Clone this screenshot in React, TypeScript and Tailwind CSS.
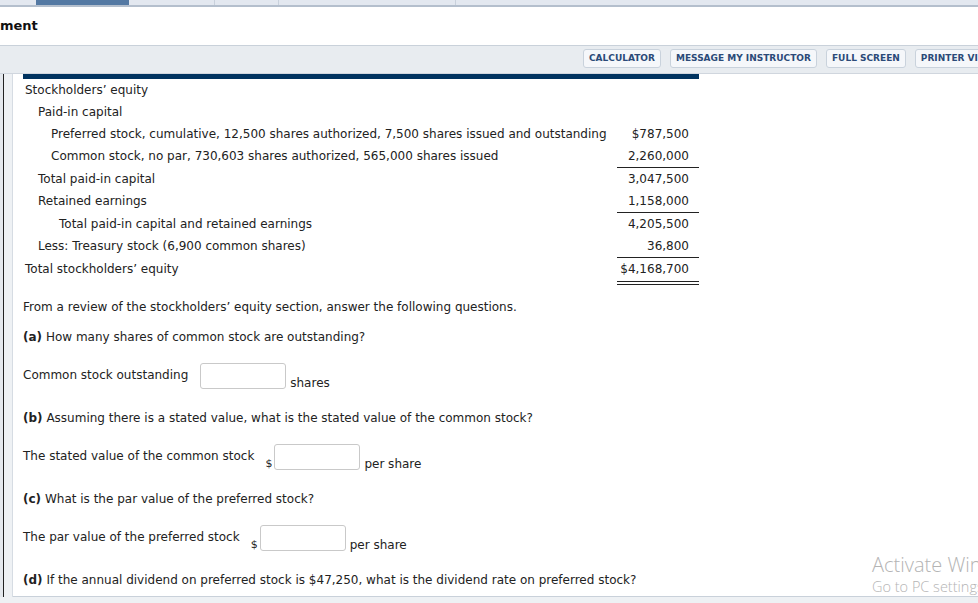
import React from 'react';

const font = { fontFamily: '"DejaVu Sans", Verdana, sans-serif' };

const rows = [
  { label: 'Stockholders\u2019 equity', indent: 'pl-[2px]', value: '', line: '' },
  { label: 'Paid-in capital', indent: 'pl-[15px]', value: '', line: '' },
  {
    label: 'Preferred stock, cumulative, 12,500 shares authorized, 7,500 shares issued and outstanding',
    indent: 'pl-[28px]',
    value: '$787,500',
    line: '',
  },
  {
    label: 'Common stock, no par, 730,603 shares authorized, 565,000 shares issued',
    indent: 'pl-[28px]',
    value: '2,260,000',
    line: '',
  },
  { label: 'Total paid-in capital', indent: 'pl-[15px]', value: '3,047,500', line: 'border-t border-[#222]' },
  { label: 'Retained earnings', indent: 'pl-[15px]', value: '1,158,000', line: '' },
  {
    label: 'Total paid-in capital and retained earnings',
    indent: 'pl-[36px]',
    value: '4,205,500',
    line: 'border-t border-[#222]',
  },
  { label: 'Less: Treasury stock (6,900 common shares)', indent: 'pl-[15px]', value: '36,800', line: '' },
  {
    label: 'Total stockholders\u2019 equity',
    indent: 'pl-[2px]',
    value: '$4,168,700',
    line: 'border-t border-[#222]',
  },
];

const AnswerInput: React.FC = () => (
  <div className="w-[86px] h-[26px] rounded-[3px] border border-[#c9c9c9] bg-white" />
);

const App: React.FC = () => {
  return (
    <div className="relative w-[978px] h-[603px] overflow-hidden bg-[#eef1f4] text-[#222]" style={font}>
      {/* top nav strip */}
      <div className="flex h-[7px] bg-[#e3e8f0] border-b-2 border-[#b4bfcd]">
        <div className="w-[36px]" />
        <div className="w-[93px] bg-[#5479a3]" />
        <div className="w-[86px] border-r border-[#c9d1dc]" />
        <div className="w-[64px] border-r border-[#c9d1dc]" />
        <div className="w-[177px] border-r border-[#c9d1dc]" />
      </div>

      {/* title */}
      <div className="h-[39px] flex items-center bg-white border-b border-[#c9d1da]">
        <span className="text-[13px] font-bold text-[#111]">ment</span>
      </div>

      {/* toolbar */}
      <div className="h-[28px] bg-[#e8ecf0] border-b border-[#d0d6de] overflow-hidden">
        <div className="w-[1000px] flex justify-end gap-[9px] pt-[3px]">
          {['CALCULATOR', 'MESSAGE MY INSTRUCTOR', 'FULL SCREEN', 'PRINTER VIEW'].map((b) => (
            <button
              key={b}
              className="h-[19px] px-[5px] rounded-[3px] border border-[#c9d2dc] bg-[#f5f7fa] text-[9px] font-bold text-[#2b4a78] leading-none whitespace-nowrap"
            >
              {b}
            </button>
          ))}
        </div>
      </div>

      <div className="flex h-[523px]">
        {/* left gutter */}
        <div className="flex w-[13px] shrink-0 bg-[#eef1f4] border-r border-[#d6dce3]">
          <div className="w-[3px] bg-[#e4e8ed]" />
          <div className="w-px bg-[#222]" />
        </div>

        <div className="flex-1 flex flex-col bg-white border-b border-[#c9d1da] pl-[10px] text-[12px]">
          {/* balance sheet */}
          <div className="w-[676px] border-t-[5px] border-[#00335f]">
            {rows.map((r) => (
              <div key={r.label} className="flex items-end last:mt-[1px]">
                <div className={`flex-1 leading-[22px] ${r.indent}`}>{r.label}</div>
                <div className={`w-[82px] text-right pr-[10px] leading-[22px] ${r.line}`}>{r.value}</div>
              </div>
            ))}
            <div className="flex justify-end">
              <div className="w-[82px] h-[4px] border-y border-[#222] mt-[1px]" />
            </div>
          </div>

          {/* questions */}
          <p className="mt-[15px] leading-[14px]">
            From a review of the stockholders&rsquo; equity section, answer the following questions.
          </p>
          <p className="mt-[16px] leading-[14px]">
            <b>(a)</b> How many shares of common stock are outstanding?
          </p>

          <div className="flex items-start mt-[19px]">
            <span className="mt-[5px] leading-[14px]">Common stock outstanding</span>
            <div className="flex items-end ml-[12px]">
              <AnswerInput />
              <span className="ml-[4px] leading-[14px] -mb-[1px]">shares</span>
            </div>
          </div>

          <p className="mt-[22px] leading-[14px]">
            <b>(b)</b> Assuming there is a stated value, what is the stated value of the common stock?
          </p>

          <div className="flex items-start mt-[19px]">
            <span className="mt-[5px] leading-[14px]">The stated value of the common stock</span>
            <div className="flex items-end ml-[11px]">
              <span className="leading-[14px] -mb-[1px] text-[11px] mr-[2px]">$</span>
              <AnswerInput />
              <span className="ml-[4px] leading-[14px] -mb-[1px]">per share</span>
            </div>
          </div>

          <p className="mt-[22px] leading-[14px]">
            <b>(c)</b> What is the par value of the preferred stock?
          </p>

          <div className="flex items-start mt-[19px]">
            <span className="mt-[5px] leading-[14px]">The par value of the preferred stock</span>
            <div className="flex items-end ml-[11px]">
              <span className="leading-[14px] -mb-[1px] text-[11px] mr-[2px]">$</span>
              <AnswerInput />
              <span className="ml-[4px] leading-[14px] -mb-[1px]">per share</span>
            </div>
          </div>

          <p className="mt-[22px] leading-[14px]">
            <b>(d)</b> If the annual dividend on preferred stock is $47,250, what is the dividend rate on preferred stock?
          </p>
        </div>
      </div>

      {/* windows activation watermark */}
      <div
        className="absolute left-[872px] top-[552px] text-[#b4b4b4] whitespace-nowrap pointer-events-none"
        style={{ fontFamily: '"Open Sans", "Noto Sans", sans-serif' }}
      >
        <div className="text-[20px] font-light leading-[25px]">Activate Windows</div>
        <div className="text-[14.5px] font-light leading-[20px]">Go to PC settings to activate Windows.</div>
      </div>
    </div>
  );
};

export default App;
